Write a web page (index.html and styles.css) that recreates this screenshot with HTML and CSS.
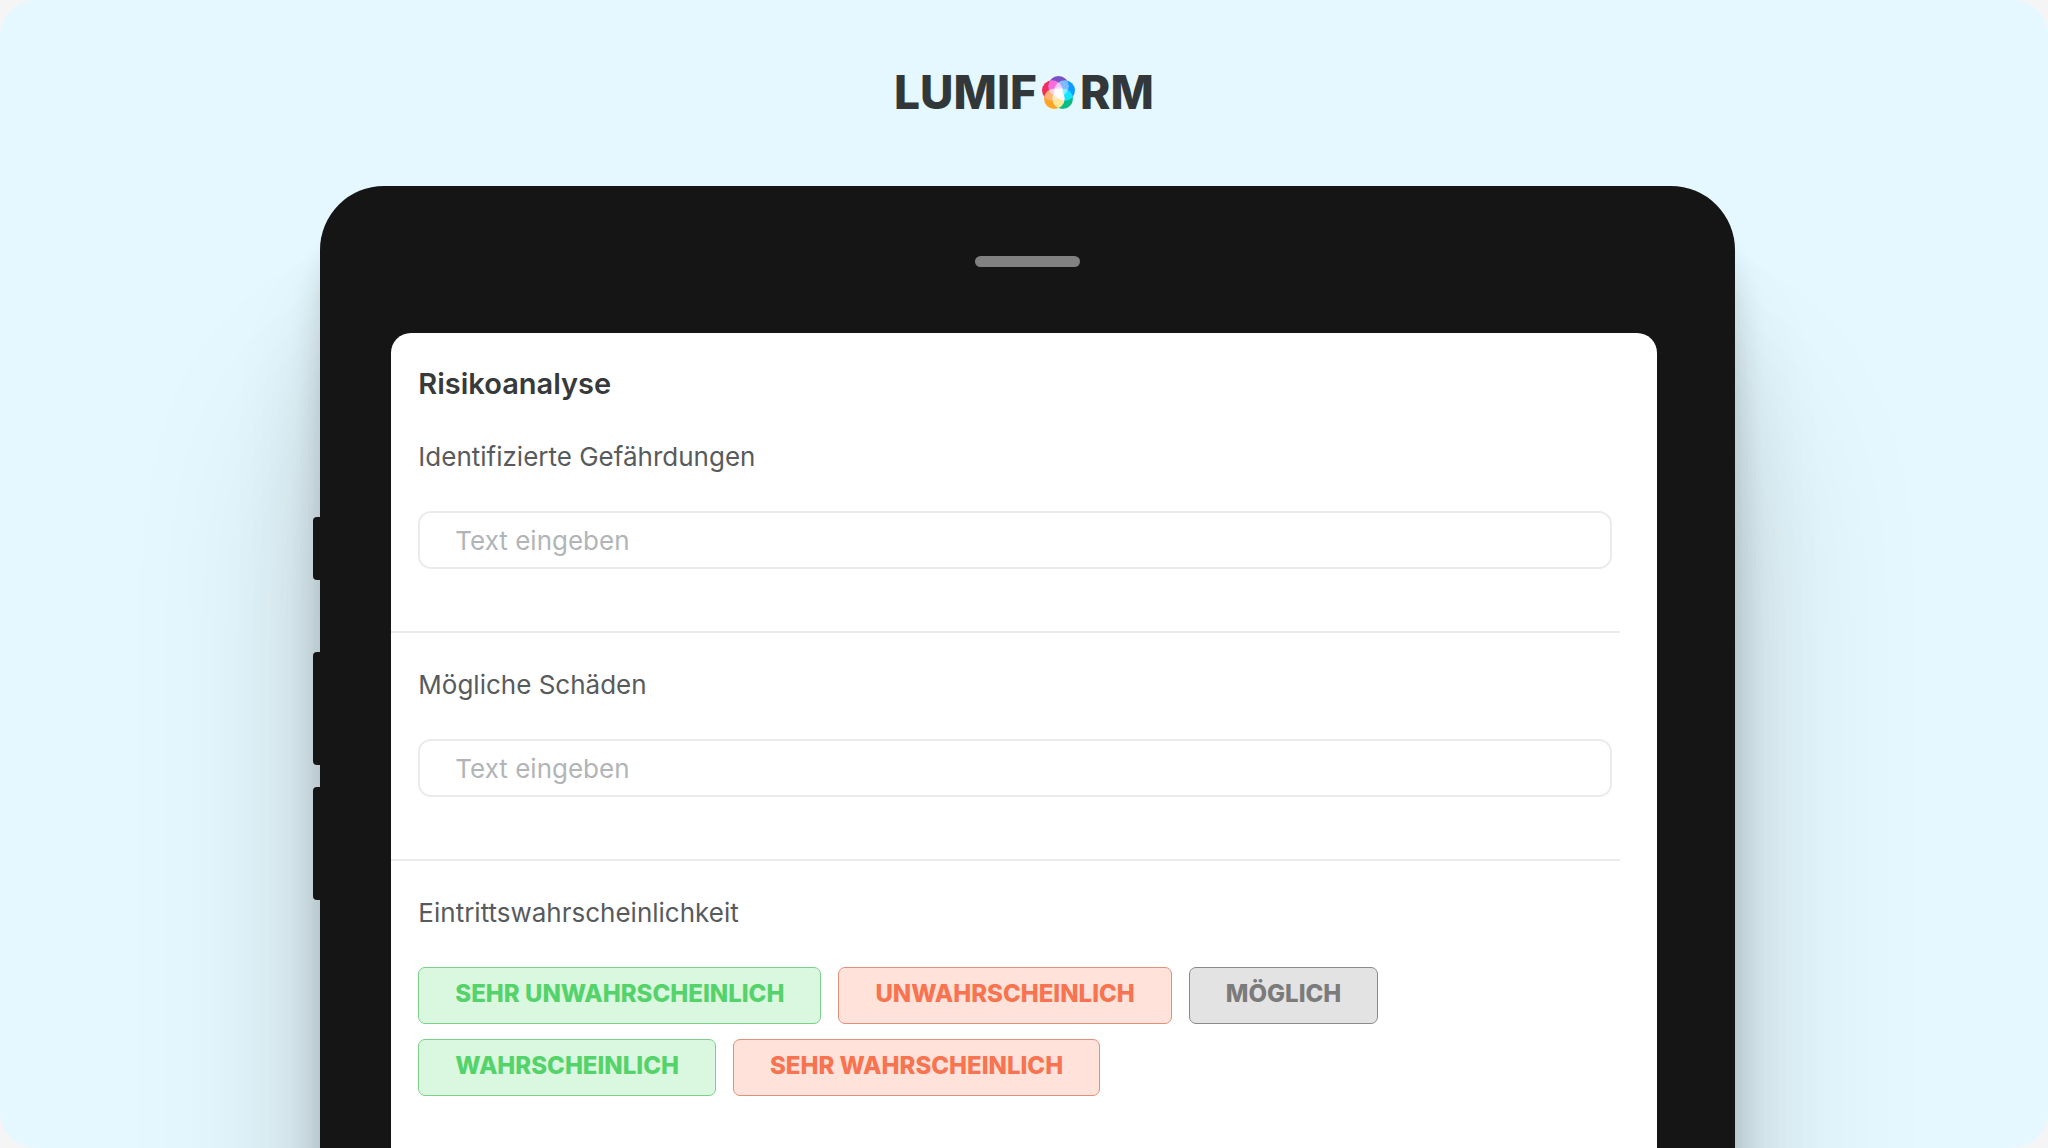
FILE: index.html
```html
<!DOCTYPE html>
<html lang="de">
<head>
    <meta charset="UTF-8">
    <meta name="viewport" content="width=device-width, initial-scale=1.0">
    <title>Lumiform - Risikoanalyse</title>
    <link rel="stylesheet" href="styles.css">
</head>
<body>

<div class="stage">
    <header class="logo">
        <span>LUMIF</span>
        <svg class="logo-orb" viewBox="0 0 32 32" aria-hidden="true">
            <circle cx="16" cy="10" r="10" fill="#7a50c8"/>
            <circle cx="22" cy="14" r="10" fill="#0c9cff"/>
            <circle cx="20" cy="22" r="10" fill="#08bd86"/>
            <circle cx="12" cy="22" r="10" fill="#ffa424"/>
            <circle cx="10" cy="14" r="10" fill="#f22c5c"/>
            <circle class="orb-core" cx="16" cy="16" r="5"/>
        </svg>
        <span>RM</span>
    </header>

    <div class="tablet">
        <div class="side-buttons">
            <span class="side-button small"></span>
            <span class="side-button"></span>
            <span class="side-button"></span>
        </div>

        <div class="tablet-body">
            <div class="speaker-bar">
                <span class="speaker"></span>
            </div>

            <main class="screen">
                <h1>Risikoanalyse</h1>

                <form>
                    <div class="field">
                        <label for="gefaehrdungen">Identifizierte Gefährdungen</label>
                        <input type="text" id="gefaehrdungen" name="gefaehrdungen" placeholder="Text eingeben">
                    </div>

                    <div class="field">
                        <label for="schaeden">Mögliche Schäden</label>
                        <input type="text" id="schaeden" name="schaeden" placeholder="Text eingeben">
                    </div>

                    <div class="field" role="group" aria-labelledby="wahrscheinlichkeit">
                        <p id="wahrscheinlichkeit">Eintrittswahrscheinlichkeit</p>
                        <div class="options">
                            <button type="button" class="green">SEHR UNWAHRSCHEINLICH</button>
                            <button type="button" class="red">UNWAHRSCHEINLICH</button>
                            <button type="button" class="gray">MÖGLICH</button>
                            <button type="button" class="green">WAHRSCHEINLICH</button>
                            <button type="button" class="red">SEHR WAHRSCHEINLICH</button>
                        </div>
                    </div>
                </form>
            </main>
        </div>
    </div>
</div>

</body>
</html>
```
FILE: styles.css
```css
* {
    box-sizing: border-box;
}
body {
    font-family: Inter, Arial, sans-serif;
    background-color: #f5f5f5;
    margin: 0;
}
.stage {
    display: flex;
    flex-direction: column;
    align-items: center;
    height: 100vh;
    background-color: #e6f8ff;
    border-radius: 36px;
    overflow: hidden;
}
.logo {
    display: flex;
    align-items: center;
    gap: 5px;
    height: 184px;
    margin-bottom: 2px;
    flex-shrink: 0;
    font-size: 46px;
    font-weight: 800;
    color: #32373a;
}
.logo-orb {
    width: 33px;
    height: 33px;
    isolation: isolate;
}
.logo-orb circle {
    mix-blend-mode: screen;
}
.logo-orb .orb-core {
    fill: white;
    opacity: 0.5;
}
.tablet {
    display: flex;
    flex: 1;
    width: 69.4%;
}
.side-buttons {
    display: flex;
    flex-direction: column;
    gap: 22px;
    width: 7px;
    padding-top: 331px;
    position: relative;
    z-index: 1;
}
.side-button {
    height: 113px;
    background-color: #151515;
    border-radius: 4px 0 0 4px;
}
.side-button.small {
    height: 63px;
    margin-bottom: 50px;
}
.tablet-body {
    display: flex;
    flex-direction: column;
    flex: 1;
    background-color: #151515;
    border-radius: 64px 64px 0 0;
    box-shadow: 0 50px 30px rgba(0, 0, 0, 0.15), 0 120px 90px rgba(0, 0, 0, 0.12), 0 220px 200px rgba(0, 0, 0, 0.14);
}
.speaker-bar {
    display: flex;
    align-items: center;
    justify-content: center;
    height: 147px;
    padding-top: 4px;
    flex-shrink: 0;
}
.speaker {
    width: 105px;
    height: 11px;
    background-color: #818181;
    border-radius: 6px;
}
.screen {
    flex: 1;
    margin: 0 78px 0 71px;
    padding: 32px 37px 0 0;
    background-color: white;
    border-radius: 20px 20px 0 0;
}
h1 {
    margin: 0;
    padding-left: 27px;
    font-size: 29px;
    line-height: 38px;
    font-weight: 600;
    color: #37393b;
}
form {
    padding-top: 2px;
}
.field {
    padding: 37px 8px 62px 27px;
    border-bottom: 2px solid #ebebeb;
}
.field:last-child {
    border-bottom: none;
}
.field label, .field p {
    display: block;
    margin: 0 0 39px;
    font-size: 26px;
    line-height: 30px;
    color: #585b5d;
}
.field input {
    display: block;
    width: 100%;
    height: 58px;
    padding: 0 35px;
    font-family: inherit;
    font-size: 26px;
    background-color: white;
    border: 2px solid #ebebeb;
    border-radius: 13px;
}
.field input::placeholder {
    color: #b2b5b7;
}
.options {
    display: flex;
    flex-wrap: wrap;
    gap: 15px 17px;
    max-width: 1000px;
}
.options button {
    height: 57px;
    padding: 0 36px 5px;
    font-family: inherit;
    font-size: 24px;
    font-weight: 800;
    border: 1px solid;
    border-radius: 7px;
    cursor: pointer;
}
.options .green {
    color: #55d36b;
    background-color: #daf7df;
    border-color: #7bd18c;
}
.options .red {
    color: #f8734f;
    background-color: #ffe2da;
    border-color: #e2907c;
}
.options .gray {
    color: #7b7b7b;
    background-color: #e3e3e3;
    border-color: #8a8a8a;
}
```
